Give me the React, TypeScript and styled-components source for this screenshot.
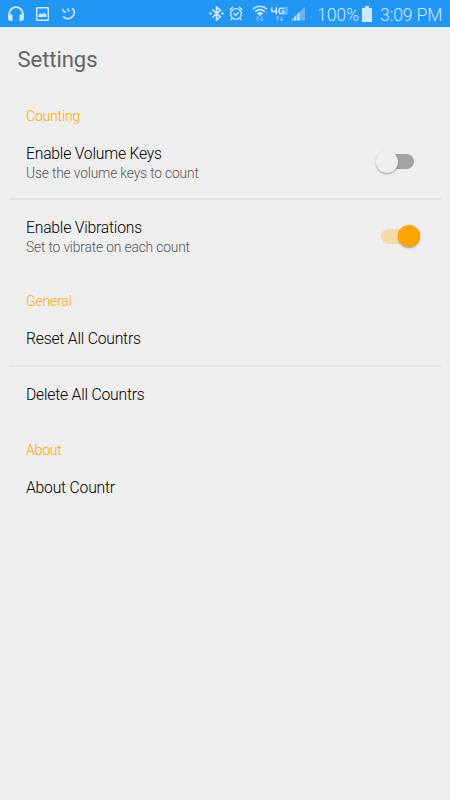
import React from 'react';
import styled, { createGlobalStyle } from 'styled-components';

const GlobalStyle = createGlobalStyle`
  * { box-sizing: border-box; }
  body { margin: 0; background: #eeeeee; font-family: Roboto, "Liberation Sans", sans-serif; }
`;

const Screen = styled.main`
  width: 450px;
  height: 800px;
  background: #eeeeee;
  overflow: hidden;
`;

const StatusBar = styled.header`
  display: flex;
  align-items: center;
  justify-content: space-between;
  height: 27px;
  padding: 0 8px;
  background: #2196f3;
  border-bottom: 1px solid #1b8ff0;
  color: #d0e8fc;
`;

const StatusGroup = styled.div`
  display: flex;
  align-items: center;
  height: 27px;
  padding-top: 1px;
`;

const StatusIcon = styled.svg<{ $gap?: number }>`
  display: block;
  flex: none;
  margin-right: ${({ $gap = 0 }) => $gap}px;
`;

const StatusText = styled.span<{ $gap?: number; $width: number }>`
  width: ${({ $width }) => $width}px;
  margin-right: ${({ $gap = 0 }) => $gap}px;
  padding-top: 2px;
  font-size: 17.7px;
  line-height: 24px;
  font-weight: 300;
  letter-spacing: -0.17px;
  white-space: nowrap;
`;

const TitleBar = styled.div`
  display: flex;
  align-items: center;
  height: 64px;
  padding: 1px 0 0 17.5px;
`;

const Title = styled.h1`
  margin: 0;
  font-size: 22px;
  line-height: 26px;
  font-weight: 400;
  letter-spacing: -0.05px;
  color: #646464;
`;

const Category = styled.h2<{ $height: number }>`
  display: flex;
  align-items: flex-end;
  height: ${({ $height }) => $height}px;
  margin: 0;
  padding-left: 26px;
  font-size: 13.9px;
  line-height: 18px;
  font-weight: 300;
  letter-spacing: -0.12px;
  color: #ffa500;
`;

const Row = styled.div<{ $height: number; $shift?: number }>`
  display: flex;
  align-items: center;
  justify-content: space-between;
  height: ${({ $height }) => $height}px;
  padding: ${({ $shift = 0 }) => $shift}px 36px 0 26px;
`;

const RowLabel = styled.div`
  font-size: 15.7px;
  line-height: 20px;
  font-weight: 300;
  letter-spacing: -0.2px;
  color: #000;
`;

const RowHint = styled.div`
  font-size: 13.8px;
  line-height: 18px;
  font-weight: 300;
  letter-spacing: -0.16px;
  color: #585858;
`;

const Divider = styled.hr`
  height: 2px;
  margin: 0 9px;
  border: 0;
  background: #e2e2e2;
`;

const Track = styled.span<{ $on: boolean }>`
  display: flex;
  align-items: center;
  justify-content: ${({ $on }) => ($on ? 'flex-end' : 'flex-start')};
  width: 33px;
  height: 15px;
  margin-top: -2px;
  border-radius: 8px;
  background: ${({ $on }) => ($on ? '#f5dba8' : '#a3a3a3')};
`;

const Thumb = styled.span<{ $on: boolean }>`
  flex: none;
  width: 22px;
  height: 22px;
  margin: ${({ $on }) => ($on ? '0 -6px 0 0' : '0 0 0 -5px')};
  border-radius: 50%;
  background: ${({ $on }) => ($on ? '#ffa500' : '#efefef')};
  box-shadow: 0 1px 2px rgba(0, 0, 0, 0.35);
`;

function Switch({ on }: { on: boolean }) {
  return (
    <Track $on={on} role="switch" aria-checked={on}>
      <Thumb $on={on} />
    </Track>
  );
}

function HeadphonesIcon() {
  return (
    <StatusIcon $gap={12} width="16" height="16" viewBox="0 0 17 17" fill="none" stroke="currentColor">
      <path d="M1.3 12V8.4a7.2 7.2 0 0 1 14.4 0V12" strokeWidth="2" />
      <path d="M0 9h4.8v7H3.3Q0 16 0 12.5zM17 9h-4.8v7h1.5q3.3 0 3.3-3.5z" fill="currentColor" stroke="none" />
    </StatusIcon>
  );
}

function PictureIcon() {
  return (
    <StatusIcon $gap={13} width="13" height="14" viewBox="0 0 13 14" fill="none" stroke="currentColor">
      <rect x=".75" y=".75" width="11.5" height="12.5" rx=".6" strokeWidth="1.5" />
      <path d="M2.5 10V8l2-2 1.5 1.5L8 5.5 10.5 8v2z" fill="currentColor" stroke="none" />
    </StatusIcon>
  );
}

function SmileIcon() {
  return (
    <StatusIcon width="14" height="14" viewBox="0 0 14 14" fill="none" stroke="currentColor" strokeLinecap="round">
      <path d="M10.4 1.8C13.4 3.4 13 8.4 9.4 10.6 6.3 12.4 3 12 1.6 9.8" strokeWidth="1.7" />
      <path d="M.9 2.6q.2 2.2 2.4 2.6M5.6 1.4q-.1 2 1.5 2.8" strokeWidth="1.5" />
    </StatusIcon>
  );
}

function BluetoothIcon() {
  return (
    <StatusIcon $gap={5} width="15" height="15" viewBox="0 0 15 15" fill="none" stroke="currentColor" strokeWidth="1.6">
      <path d="M3.3 3.5l8 7.3-3.8 3.2V1l3.8 3.2-8 7.3" />
      <path d="M.5 7.5h2.2M12.2 7.5h2.3" strokeWidth="2" />
    </StatusIcon>
  );
}

function AlarmIcon() {
  return (
    <StatusIcon $gap={9} width="14" height="15" viewBox="0 0 14 15" fill="none" stroke="currentColor">
      <circle cx="7" cy="8" r="5.4" strokeWidth="1.4" />
      <path d="M4.5 7.6l2 2 3.2-3.4M.7 4L4 1M13.3 4L10 1M3 12.4l-1.3 1.7M11 12.4l1.3 1.7" strokeWidth="1.4" />
    </StatusIcon>
  );
}

function WifiIcon() {
  return (
    <StatusIcon $gap={3} width="16" height="17" viewBox="0 0 16 17" fill="none" stroke="currentColor">
      <path d="M.8 4.2Q8-1.7 15.2 4.2M3.2 6.7Q8 2.5 12.8 6.7M5.4 9Q8 6.7 10.6 9" strokeWidth="1.5" />
      <path d="M8 8.6l1.5 1.2L8 11.4 6.5 9.8z" fill="currentColor" stroke="none" />
      <path d="M5.7 16v-4M4.2 13.4l1.5-1.7 1.5 1.7M9.7 11.5v4M8.2 14.1l1.5 1.7 1.5-1.7" opacity=".6" />
    </StatusIcon>
  );
}

function NetworkIcon() {
  return (
    <StatusIcon $gap={3} width="17" height="17" viewBox="0 0 17 17" fill="none" stroke="currentColor">
      <path d="M.8 2.5v4h5.7M5.3 2.5v6.8M13.2 3.2H9.6Q8.2 3.2 8.2 4.5v2.7q0 1.4 1.4 1.4h3V6h-2.1" strokeWidth="1.5" />
      <path d="M14.2 2.5v2.4M14.2 6.4v2.8M14.2 2.9H17M14.2 4.8H17M14.2 6.6H17M14.2 8.8H17" strokeWidth=".8" opacity=".7" />
      <path d="M6.5 16v-4M5 13.4l1.5-1.7L8 13.4M10.5 11.5v4M9 14.1l1.5 1.7 1.5-1.7" opacity=".6" />
    </StatusIcon>
  );
}

function SignalIcon() {
  return (
    <StatusIcon $gap={12} width="14" height="15" viewBox="0 0 15 15" fill="currentColor">
      <path d="M0 15L15 0v15z" opacity=".4" />
      <path d="M1 15v-1l1-1v2zM3.5 15v-3.5l2-2V15zM7 15V8l2-2v9z" />
    </StatusIcon>
  );
}

function BatteryIcon() {
  return (
    <StatusIcon $gap={8} width="10" height="16" viewBox="0 0 10 16" fill="currentColor">
      <path d="M3 0h4v2h3v14H0V2h3z" />
    </StatusIcon>
  );
}

export default function App() {
  return (
    <>
      <GlobalStyle />
      <Screen>
        <StatusBar>
          <StatusGroup>
            <HeadphonesIcon />
            <PictureIcon />
            <SmileIcon />
          </StatusGroup>
          <StatusGroup>
            <BluetoothIcon />
            <AlarmIcon />
            <WifiIcon />
            <NetworkIcon />
            <SignalIcon />
            <StatusText $width={42} $gap={3}>100%</StatusText>
            <BatteryIcon />
            <StatusText $width={62}>3:09 PM</StatusText>
          </StatusGroup>
        </StatusBar>
        <TitleBar>
          <Title>Settings</Title>
        </TitleBar>

        <Category $height={34}>Counting</Category>
        <Row $height={73} $shift={2}>
          <div>
            <RowLabel>Enable Volume Keys</RowLabel>
            <RowHint>Use the volume keys to count</RowHint>
          </div>
          <Switch on={false} />
        </Row>
        <Divider />
        <Row $height={74}>
          <div>
            <RowLabel>Enable Vibrations</RowLabel>
            <RowHint>Set to vibrate on each count</RowHint>
          </div>
          <Switch on />
        </Row>

        <Category $height={36}>General</Category>
        <Row $height={55} $shift={2}>
          <RowLabel>Reset All Countrs</RowLabel>
        </Row>
        <Divider />
        <Row $height={56}>
          <RowLabel>Delete All Countrs</RowLabel>
        </Row>

        <Category $height={36}>About</Category>
        <Row $height={56} $shift={2}>
          <RowLabel>About Countr</RowLabel>
        </Row>
      </Screen>
    </>
  );
}
